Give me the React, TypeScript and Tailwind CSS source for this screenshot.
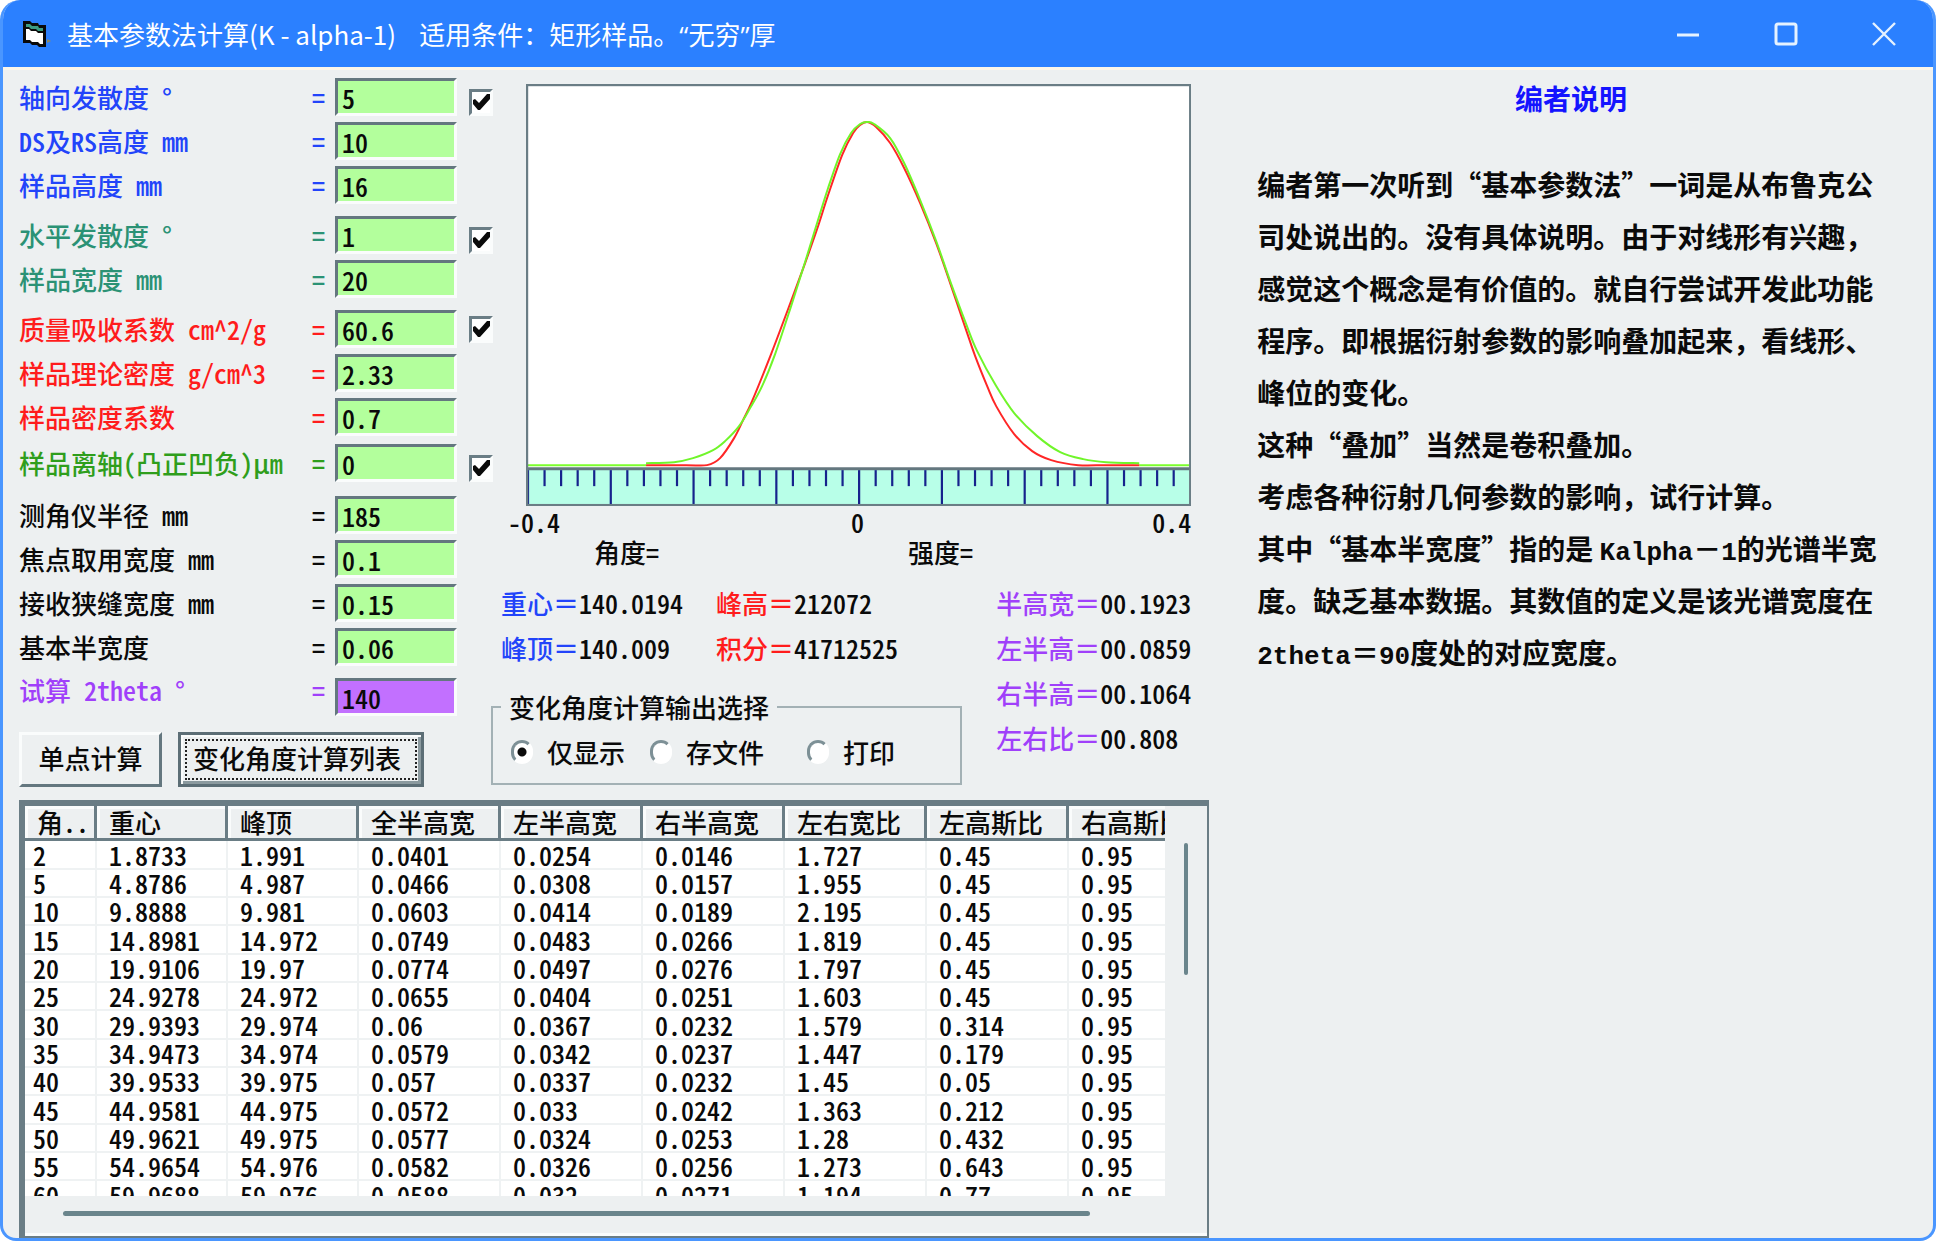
import React, { useState } from 'react';
import clsx from 'clsx';

interface Param {
  id: string;
  label: string;
  value: string;
  tone: string;
  gap?: string;
  check?: string;
  fill?: string;
  labelAlign?: string;
}

const BLUE = 'text-[#2244fa]';
const TEAL = 'text-[#2b9275]';
const RED = 'text-[#ff1c1c]';
const GREEN = 'text-[#2f9e1c]';
const BLACK = 'text-[#0a0a0a]';
const PURPLE = 'text-[#a040fa]';

const PARAMS: Param[] = [
  { id: 'axial', label: '轴向发散度 °', value: '5', tone: BLUE, check: 'self-end' },
  { id: 'ds', label: 'DS及RS高度 mm', value: '10', tone: BLUE, gap: 'mt-1.5' },
  { id: 'height', label: '样品高度 mm', value: '16', tone: BLUE, gap: 'mt-1.5' },
  { id: 'horizontal', label: '水平发散度 °', value: '1', tone: TEAL, gap: 'mt-3', check: 'self-end' },
  { id: 'width', label: '样品宽度 mm', value: '20', tone: TEAL, gap: 'mt-1.5' },
  { id: 'absorption', label: '质量吸收系数 cm^2/g', value: '60.6', tone: RED, gap: 'mt-3', check: 'self-center' },
  { id: 'density', label: '样品理论密度 g/cm^3', value: '2.33', tone: RED, gap: 'mt-1.5' },
  { id: 'densityFactor', label: '样品密度系数', value: '0.7', tone: RED, gap: 'mt-1.5' },
  { id: 'offAxis', label: '样品离轴(凸正凹负)μm', value: '0', tone: GREEN, gap: 'mt-2', check: 'self-end' },
  { id: 'radius', label: '测角仪半径 mm', value: '185', tone: BLACK, gap: 'mt-3.5' },
  { id: 'focus', label: '焦点取用宽度 mm', value: '0.1', tone: BLACK, gap: 'mt-1.5' },
  { id: 'slit', label: '接收狭缝宽度 mm', value: '0.15', tone: BLACK, gap: 'mt-1.5' },
  { id: 'base', label: '基本半宽度', value: '0.06', tone: BLACK, gap: 'mt-1.5' },
  { id: 'theta', label: '试算 2theta °', value: '140', tone: PURPLE, gap: 'mt-3', fill: 'bg-[#c270ff]', labelAlign: 'self-start leading-6' },
];

const COLUMNS = [
  { name: '角..', width: 'w-[72px]' },
  { name: '重心', width: 'w-[131px]' },
  { name: '峰顶', width: 'w-[131px]' },
  { name: '全半高宽', width: 'w-[142px]' },
  { name: '左半高宽', width: 'w-[142px]' },
  { name: '右半高宽', width: 'w-[142px]' },
  { name: '左右宽比', width: 'w-[142px]' },
  { name: '左高斯比', width: 'w-[142px]' },
  { name: '右高斯比', width: 'w-[142px]' },
];

const ROWS = [
  ['2', '1.8733', '1.991', '0.0401', '0.0254', '0.0146', '1.727', '0.45', '0.95'],
  ['5', '4.8786', '4.987', '0.0466', '0.0308', '0.0157', '1.955', '0.45', '0.95'],
  ['10', '9.8888', '9.981', '0.0603', '0.0414', '0.0189', '2.195', '0.45', '0.95'],
  ['15', '14.8981', '14.972', '0.0749', '0.0483', '0.0266', '1.819', '0.45', '0.95'],
  ['20', '19.9106', '19.97', '0.0774', '0.0497', '0.0276', '1.797', '0.45', '0.95'],
  ['25', '24.9278', '24.972', '0.0655', '0.0404', '0.0251', '1.603', '0.45', '0.95'],
  ['30', '29.9393', '29.974', '0.06', '0.0367', '0.0232', '1.579', '0.314', '0.95'],
  ['35', '34.9473', '34.974', '0.0579', '0.0342', '0.0237', '1.447', '0.179', '0.95'],
  ['40', '39.9533', '39.975', '0.057', '0.0337', '0.0232', '1.45', '0.05', '0.95'],
  ['45', '44.9581', '44.975', '0.0572', '0.033', '0.0242', '1.363', '0.212', '0.95'],
  ['50', '49.9621', '49.975', '0.0577', '0.0324', '0.0253', '1.28', '0.432', '0.95'],
  ['55', '54.9654', '54.976', '0.0582', '0.0326', '0.0256', '1.273', '0.643', '0.95'],
  ['60', '59.9688', '59.976', '0.0588', '0.032', '0.0271', '1.194', '0.77', '0.95'],
];

const NOTES = [
  '编者第一次听到“基本参数法”一词是从布鲁克公',
  '司处说出的。没有具体说明。由于对线形有兴趣，',
  '感觉这个概念是有价值的。就自行尝试开发此功能',
  '程序。即根据衍射参数的影响叠加起来，看线形、',
  '峰位的变化。',
  '这种“叠加”当然是卷积叠加。',
  '考虑各种衍射几何参数的影响，试行计算。',
  '其中“基本半宽度”指的是 Kalpha－1的光谱半宽',
  '度。缺乏基本数据。其数值的定义是该光谱宽度在',
  '2theta＝90度处的对应宽度。',
];

type Point = [number, number];

const FITTED: Point[] = [
  [120, 379], [148, 378], [167, 374], [187, 366], [199, 357], [213, 342], [224, 324], [236, 302],
  [249, 270], [265, 222], [279, 178], [291, 139], [302, 104], [314, 70], [325, 49], [334, 40],
  [341, 38], [348, 40], [364, 54], [378, 79], [394, 116], [410, 157], [424, 197], [440, 240],
  [451, 267], [470, 302], [488, 329], [511, 352], [534, 368], [557, 375], [580, 378], [613, 379],
];

const MEASURED: Point[] = [
  [120, 381], [160, 381], [181, 381], [194, 374], [208, 354], [217, 336], [226, 317], [245, 270],
  [265, 217], [279, 179], [291, 145], [302, 111], [316, 71], [327, 49], [334, 41], [341, 38],
  [350, 43], [364, 59], [378, 84], [394, 119], [410, 159], [424, 199], [440, 246], [449, 272],
  [461, 302], [470, 322], [488, 350], [506, 367], [525, 376], [552, 381], [580, 381], [613, 381],
];

// Catmull-Rom through the sample points
function smooth(points: Point[]) {
  let d = `M${points[0][0]} ${points[0][1]}`;
  for (let i = 0; i < points.length - 1; i++) {
    const p0 = points[i - 1] || points[i];
    const p1 = points[i];
    const p2 = points[i + 1];
    const p3 = points[i + 2] || p2;
    d += ` C${p1[0] + (p2[0] - p0[0]) / 6} ${p1[1] + (p2[1] - p0[1]) / 6}`;
    d += ` ${p2[0] - (p3[0] - p1[0]) / 6} ${p2[1] - (p3[1] - p1[1]) / 6} ${p2[0]} ${p2[1]}`;
  }
  return d;
}

function TitleBar() {
  return (
    <header className="flex h-[67px] items-center bg-[#2b80ff] pl-5 text-white">
      <svg className="h-[26px] w-7 shrink-0" viewBox="0 0 28 26">
        <path d="M0 0h7l2 2h6l1 2h7v22h-7l-2-2H9l-2-2H0z" fill="#0a0a0a" />
        <path d="M3 3h4l2 2h6l1 2h4v3h-5l-2-2H8L6 6H3z" fill="#3c9c84" />
        <path d="M3 8h3l2 2h5l2 2h5v11h-3l-2-2H9l-2-2H3z" fill="#fff" />
        <path d="M24 18l4 2-4 2z" fill="#8a8a6a" />
      </svg>
      <h1 className="ml-4 flex-1 text-[26px] leading-8 whitespace-pre">
        基本参数法计算(K - alpha-1)    适用条件：矩形样品。
        <span className="font-['Open_Sans',sans-serif] leading-none">“</span>无穷
        <span className="font-['Open_Sans',sans-serif] leading-none">”</span>厚
      </h1>
      <button type="button" aria-label="最小化" className="grid h-full w-[98px] place-items-center">
        <svg className="h-6 w-6" viewBox="0 0 24 24" fill="none" stroke="#e6f2ff" strokeWidth="3">
          <path d="M1 13h22" />
        </svg>
      </button>
      <button type="button" aria-label="最大化" className="grid h-full w-[98px] place-items-center">
        <svg className="h-6 w-6" viewBox="0 0 24 24" fill="none" stroke="#e6f2ff" strokeWidth="3">
          <rect x="2" y="2" width="20" height="20" rx="2" />
        </svg>
      </button>
      <button type="button" aria-label="关闭" className="grid h-full w-[98px] place-items-center">
        <svg className="h-6 w-6" viewBox="0 0 24 24" fill="none" stroke="#e6f2ff" strokeWidth="2.4">
          <path d="M1 1l22 22M23 1L1 23" />
        </svg>
      </button>
    </header>
  );
}

function CheckBox({ label, className }: { label: string; className: string }) {
  return (
    <span className={clsx('ml-3 grid h-[27px] w-6 shrink-0 place-items-center', className)}>
      <input
        type="checkbox"
        defaultChecked
        aria-label={label}
        className="peer col-start-1 row-start-1 h-full w-full appearance-none border-3 border-[#fafcfc] border-t-[#6a7d85] border-l-[#6a7d85] bg-white"
      />
      <svg
        className="pointer-events-none invisible col-start-1 row-start-1 h-[17px] w-[17px] peer-checked:visible"
        viewBox="0 0 17 17"
      >
        <path d="M0 6l2-1 4 4 8-9h3v5L7 16H5L0 10z" fill="#0a0a0a" />
      </svg>
    </span>
  );
}

function ParamRow({ param }: { param: Param }) {
  const parts = param.label.split(/(μ)/);
  return (
    <div className={clsx('flex h-[38px] items-center', param.gap)}>
      <label
        htmlFor={param.id}
        className={clsx(
          'flex w-[316px] shrink-0 justify-between pr-2.5 whitespace-pre',
          param.tone,
          param.labelAlign || 'leading-8'
        )}
      >
        <span>
          {parts.map((part, i) =>
            i % 2 ? <span key={i} className="[font-feature-settings:'fwid']">{part}</span> : part
          )}
        </span>
        <span>=</span>
      </label>
      <input
        id={param.id}
        type="text"
        defaultValue={param.value}
        className={clsx(
          'h-full w-[122px] border-3 border-[#fafcfc] border-t-[#64777f] border-l-[#64777f] pl-1 text-[#0a0a0a] outline-none',
          param.fill || 'bg-[#b3ff9c]'
        )}
      />
      {param.check && <CheckBox label={param.label} className={param.check} />}
    </div>
  );
}

function PeakChart() {
  const ticks = Array.from({ length: 40 }, (_, i) => i);
  return (
    <svg className="block w-full" viewBox="0 0 665 422" fill="none">
      <rect width="665" height="422" fill="#fff" />
      <rect y="385" width="665" height="36" fill="#b8ffe8" />
      <path d="M2 381H120M613 381H663" stroke="#7dff2e" strokeWidth="2" />
      <path d={smooth(MEASURED)} stroke="#ff2626" strokeWidth="2" />
      <path d={smooth(FITTED)} stroke="#70f52a" strokeWidth="2" />
      <path d="M0 384.5H665" stroke="#64777f" strokeWidth="3" />
      {ticks.map(i => (
        <path
          key={i}
          d={`M${2 + i * 16.55} 386V${i % 5 === 0 ? 420 : 402}`}
          stroke="#16228c"
          strokeWidth="2.2"
        />
      ))}
      <rect x="1" y="1" width="663" height="420" stroke="#6a7d85" strokeWidth="2.4" />
    </svg>
  );
}

function Reading({ name, value, tone }: { name: string; value: string; tone: string }) {
  return (
    <div className="flex h-[45px] items-center whitespace-nowrap">
      <dt className={clsx("[font-feature-settings:normal]", tone)}>{name}＝</dt>
      <dd className="text-[#0a0a0a]">{value}</dd>
    </div>
  );
}

function OutputChoice() {
  const [mode, setMode] = useState('show');
  const options = [
    { id: 'show', label: '仅显示', width: 'w-[139px]' },
    { id: 'file', label: '存文件', width: 'w-[157px]' },
    { id: 'print', label: '打印', width: 'w-[100px]' },
  ];
  return (
    <fieldset className="mt-5 mr-[34px] h-[95px] border-2 border-[#a3b1b5] pl-4.5">
      <legend className="-ml-2.5 px-2 leading-[34px]">变化角度计算输出选择</legend>
      <div className="mt-3 flex">
        {options.map(o => (
          <label key={o.id} className={clsx('flex shrink-0 items-center gap-3.5 leading-8 whitespace-nowrap', o.width)}>
            <input
              type="radio"
              name="output"
              checked={mode === o.id}
              onChange={() => setMode(o.id)}
              className="h-6 w-[22px] shrink-0 appearance-none rounded-full border-3 border-white border-t-[#7d9096] border-l-[#7d9096] bg-white checked:bg-[radial-gradient(circle,#0a0a0a_4px,#fff_5px)]"
            />
            {o.label}
          </label>
        ))}
      </div>
    </fieldset>
  );
}

function ResultList() {
  return (
    <section className="mt-[13px] border-2 border-t-6 border-l-6 border-[#6a7d85]">
      <div className="flex">
        <div className="h-[390px] min-w-0 flex-1 overflow-hidden bg-white">
          <table className="w-[1186px] table-fixed border-separate border-spacing-0 whitespace-nowrap">
            <thead>
              <tr className="h-[35px]">
                {COLUMNS.map(c => (
                  <th
                    key={c.name}
                    className={clsx(
                      'border-r-3 border-b-3 border-[#6a7d85] bg-[#edf0f1] p-0 pl-3 text-left leading-8 font-medium shadow-[inset_3px_3px_#fafcfc]',
                      c.width
                    )}
                  >
                    {c.name}
                  </th>
                ))}
              </tr>
            </thead>
            <tbody>
              {ROWS.map(row => (
                <tr key={row[0]} className="h-7 nth-[3n+1]:h-[29px]">
                  {row.map((cell, i) => (
                    <td
                      key={i}
                      className="border-r-2 border-b-2 border-[#eff2f3] p-0 pl-3 leading-[26px] first:pl-2"
                    >
                      {cell}
                    </td>
                  ))}
                </tr>
              ))}
            </tbody>
          </table>
        </div>
        <div className="flex w-[42px] shrink-0 justify-center bg-[#edf0f1] pt-[37px]">
          <div className="h-[132px] w-1 rounded-full bg-[#6a858c]" />
        </div>
      </div>
      <div className="h-10 border-b-3 border-[#fafcfc] bg-[#edf0f1] pt-[15px] pr-[117px] pl-[38px]">
        <div className="h-[5px] rounded-full bg-[#6a858c]" />
      </div>
    </section>
  );
}

function NoteLine({ text }: { text: string }) {
  const parts = text.split(/([A-Za-z0-9]+)/);
  return (
    <span className="block h-[52px] whitespace-pre">
      {parts.map((part, i) =>
        i % 2 ? (
          <span key={i} className="font-['Liberation_Mono',monospace] text-[26px] leading-none">{part}</span>
        ) : (
          part
        )
      )}
    </span>
  );
}

export default function App() {
  return (
    <div
      lang="zh-CN"
      className="flex min-h-screen flex-col overflow-hidden rounded-t-[20px] rounded-b-[16px] border-x-3 border-b-3 border-[#4a96ff] bg-[#edf0f1] font-['Noto_Sans_CJK_SC',sans-serif] text-[26px] text-[#0a0a0a]"
    >
      <TitleBar />
      <main className="grid flex-1 grid-cols-[5fr_3fr] border-t-3 border-[#fbf6ea]">
        <div className="min-w-0 pt-2 pl-4 font-medium [font-feature-settings:'hwid']">
          <div className="flex">
            <form className="w-[472px] shrink-0">
              {PARAMS.map(p => (
                <ParamRow key={p.id} param={p} />
              ))}
              <div className="mt-4 flex gap-4">
                <button
                  type="button"
                  className="h-[55px] w-[143px] border-3 border-[#64777f] border-t-[#fafcfc] border-l-[#fafcfc] pb-1"
                >
                  单点计算
                </button>
                <button
                  type="button"
                  className="h-[55px] w-[246px] border-3 border-[#5c6e76] p-1 shadow-[inset_2px_2px_#fafcfc,inset_-3px_-3px_#8b9a9f]"
                >
                  <span className="flex h-full items-center justify-center border-2 border-dotted border-[#222] pr-2 pb-1">
                    变化角度计算列表
                  </span>
                </button>
              </div>
            </form>

            <div className="min-w-0 flex-1 pt-1.5">
              <div className="pr-[18px] pl-[35px]">
                <PeakChart />
              </div>
              <div className="grid grid-cols-3 pr-[18px] pl-[17px] leading-8">
                <span>-0.4</span>
                <span className="pl-4 text-center">0</span>
                <span className="text-right">0.4</span>
              </div>
              <div className="flex pl-[103px] leading-7">
                <span className="w-[314px]">角度=</span>
                <span>强度=</span>
              </div>
              <div className="mt-3.5 flex">
                <div className="min-w-0 flex-1">
                  <dl className="grid grid-cols-[215px_1fr] pl-2.5">
                    <Reading name="重心" value="140.0194" tone={BLUE} />
                    <Reading name="峰高" value="212072" tone={RED} />
                    <Reading name="峰顶" value="140.009" tone={BLUE} />
                    <Reading name="积分" value="41712525" tone={RED} />
                  </dl>
                  <OutputChoice />
                </div>
                <dl className="w-[213px] shrink-0">
                  <Reading name="半高宽" value="00.1923" tone={PURPLE} />
                  <Reading name="左半高" value="00.0859" tone={PURPLE} />
                  <Reading name="右半高" value="00.1064" tone={PURPLE} />
                  <Reading name="左右比" value="00.808" tone={PURPLE} />
                </dl>
              </div>
            </div>
          </div>
          <ResultList />
        </div>

        <aside className="min-w-0 px-12 pt-2 text-[28px] font-bold">
          <h2 className="text-center leading-10 text-[#1414ff]">编者说明</h2>
          <p className="mt-10 leading-[52px]">
            {NOTES.map(line => (
              <NoteLine key={line} text={line} />
            ))}
          </p>
        </aside>
      </main>
    </div>
  );
}
